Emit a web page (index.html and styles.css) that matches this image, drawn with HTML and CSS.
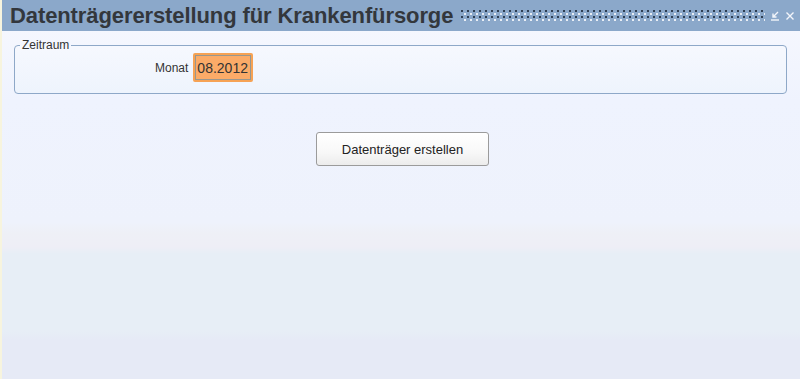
FILE: index.html
```html
<!DOCTYPE html>
<html>
<head>
    <link rel="stylesheet" href="styles.css">
</head>
<body>

<div class="window">
  <div class="titlebar">
    <h1>Datenträgererstellung für Krankenfürsorge</h1>
    <div class="grip"></div>
    <div class="tools">
      <svg width="12" height="12" viewBox="0 0 12 12">
        <path d="M9 2 L4 7 M4 3.5 L4 7 L7.5 7" stroke="#f2f5fa" stroke-width="1.4" fill="none"/>
        <path d="M2 10 L10 10" stroke="#f2f5fa" stroke-width="1.4"/>
      </svg>
      <svg width="12" height="12" viewBox="0 0 12 12">
        <path d="M2.5 2.5 L9.5 9.5 M9.5 2.5 L2.5 9.5" stroke="#f2f5fa" stroke-width="1.4"/>
      </svg>
    </div>
  </div>

  <div class="content">
    <fieldset class="group">
      <legend>Zeitraum</legend>
      <div class="row">
        <label for="monat">Monat</label>
        <input type="text" id="monat" name="monat" value="08.2012">
      </div>
    </fieldset>

    <div class="actions">
      <button type="button" class="createbtn">Datenträger erstellen</button>
    </div>
  </div>
</div>

</body>
</html>
```

FILE: styles.css
```css
* {box-sizing: border-box}
body {
  margin: 0;
  font-family: "Liberation Sans", Arial, sans-serif;
}

.window {
  width: 800px;
  height: 379px;
  display: flex;
  flex-direction: column;
  border-left: 2px solid #f7f4de;
}

.titlebar {
  height: 31px;
  background: #8ba8ca;
  display: flex;
  align-items: center;
  padding: 0 4px 0 8px;
}

.titlebar h1 {
  margin: 0;
  font-size: 22px;
  font-weight: bold;
  color: #33373c;
  white-space: nowrap;
  letter-spacing: -0.1px;
}

.grip {
  flex: 1;
  height: 11px;
  margin: 0 4px 0 8px;
  background-image:
    radial-gradient(circle at 1px 1px, #2f3e52 0.9px, transparent 1.2px),
    radial-gradient(circle at 1px 1px, #e9eef5 0.9px, transparent 1.2px);
  background-size: 6px 6px, 6px 6px;
  background-position: 0 0, 3px 3px;
}

.tools {
  display: flex;
  gap: 3px;
}

.content {
  flex: 1;
  background: linear-gradient(#f5f7fe 0%, #eff3fe 20%, #eef2fc 55%, #eef0f6 58%, #eeeef6 62%, #e7eef6 64%, #e7eef6 86%, #e6eaf6 89%, #e6eaf6 100%);
  padding: 7px 13px 0 12px;
}

.group {
  margin: 0;
  height: 56px;
  border: 1px solid #8ea8c8;
  border-radius: 4px;
  padding: 0 0 0 6px;
  background: linear-gradient(#f6f8fe, #eef4fd);
}

.group legend {
  font-size: 12px;
  color: #333;
  padding: 0 2px;
  margin-left: -1px;
}

.row {
  display: flex;
  align-items: center;
  padding-left: 134px;
  margin-top: 1px;
}

.row label {
  font-size: 12px;
  color: #333;
  margin-right: 5px;
}

.row input {
  width: 60px;
  height: 29px;
  border: 2px solid #f6a254;
  box-shadow: inset 0 0 0 1px #98978f;
  background: #fbab68;
  font-family: "Liberation Sans", Arial, sans-serif;
  font-size: 14px;
  color: #333;
  padding: 0 2px;
  border-radius: 2px;
}

.actions {
  display: flex;
  justify-content: center;
  padding-top: 38px;
  padding-left: 4px;
}

.createbtn {
  width: 173px;
  height: 34px;
  border: 1px solid #9b9b9b;
  border-radius: 3px;
  background: linear-gradient(#ffffff, #f8f8f8 60%, #ececec);
  font-family: "Liberation Sans", Arial, sans-serif;
  font-size: 13px;
  color: #222;
  cursor: pointer;
}
```
